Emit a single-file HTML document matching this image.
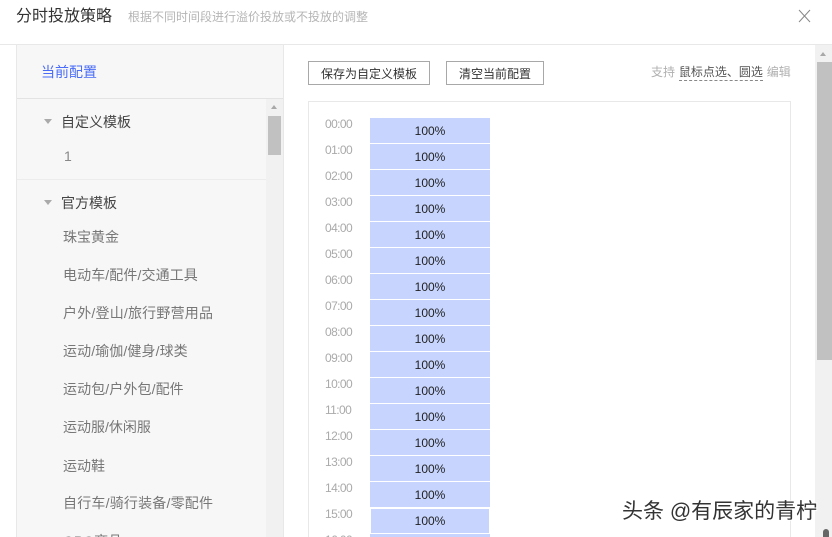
<!DOCTYPE html>
<html><head><meta charset="utf-8">
<style>
html,body{margin:0;padding:0;width:832px;height:537px;overflow:hidden;background:#fff}
body{position:relative;font-family:"Liberation Sans","Noto Sans CJK SC",sans-serif;font-size:12px;color:#333}
.a{position:absolute;white-space:nowrap}
.t{position:absolute;left:325px;width:30px;font-size:12px;letter-spacing:-.6px;line-height:14px;color:#aaa}
.c{position:absolute;left:370px;width:120px;height:25px;background:#c6d4fe;text-align:center;line-height:26px;font-size:12px;color:#222}
.i{position:absolute;left:63px;font-size:14px;line-height:18px;color:#777;white-space:nowrap}
.b{position:absolute;top:61px;height:22px;border:1px solid #a8a8a8;text-align:center;line-height:24px;font-size:12px;color:#333;background:#fff;box-sizing:content-box}
</style></head><body>
<div class="a" style="left:16px;top:6px;font-size:16px;line-height:22px;color:#333">分时投放策略</div>
<div class="a" style="left:128px;top:8px;font-size:12px;line-height:18px;color:#b5b5b5">根据不同时间段进行溢价投放或不投放的调整</div>
<svg class="a" style="left:798px;top:9px" width="13" height="14" viewBox="0 0 13 14"><path d="M1 1L12 13M12 1L1 13" stroke="#888" stroke-width="1" fill="none"/></svg>
<div class="a" style="left:0;top:44px;width:832px;height:1px;background:#e8e8e8"></div>

<div class="a" style="left:16px;top:45px;width:268px;height:492px;background:#f7f7f7;border-left:1px solid #e8e8e8;border-right:1px solid #e8e8e8;box-sizing:border-box"></div>
<div class="a" style="left:41px;top:63px;font-size:14px;line-height:18px;color:#4a6cf7">当前配置</div>
<div class="a" style="left:17px;top:98px;width:266px;height:1px;background:#e3e3e3"></div>
<div class="a" style="left:266px;top:99px;width:17px;height:438px;background:#f1f1f1"></div>
<div class="a" style="left:268px;top:116px;width:13px;height:39px;background:#c1c1c1"></div>
<div class="a" style="left:271px;top:105px;width:0;height:0;border-left:3.5px solid transparent;border-right:3.5px solid transparent;border-bottom:4px solid #a8a8a8"></div>
<div class="a" style="left:44px;top:119px;width:0;height:0;border-left:4px solid transparent;border-right:4px solid transparent;border-top:5px solid #aaa"></div>
<div class="a" style="left:61px;top:113px;font-size:14px;line-height:18px;color:#444">自定义模板</div>
<div class="i" style="left:64px;top:147px;color:#888">1</div>
<div class="a" style="left:17px;top:179px;width:249px;height:1px;background:#ececec"></div>
<div class="a" style="left:44px;top:200px;width:0;height:0;border-left:4px solid transparent;border-right:4px solid transparent;border-top:5px solid #aaa"></div>
<div class="a" style="left:61px;top:194px;font-size:14px;line-height:18px;color:#444">官方模板</div>
<div class="i" style="top:228px">珠宝黄金</div>
<div class="i" style="top:266px;letter-spacing:.1px">电动车/配件/交通工具</div>
<div class="i" style="top:304px;letter-spacing:.2px">户外/登山/旅行野营用品</div>
<div class="i" style="top:342px;letter-spacing:.1px">运动/瑜伽/健身/球类</div>
<div class="i" style="top:380px;letter-spacing:.1px">运动包/户外包/配件</div>
<div class="i" style="top:418px">运动服/休闲服</div>
<div class="i" style="top:457px">运动鞋</div>
<div class="i" style="top:494px;letter-spacing:.2px">自行车/骑行装备/零配件</div>
<div class="i" style="top:532px">OPO商品</div>

<div class="b" style="left:308px;width:120px">保存为自定义模板</div>
<div class="b" style="left:446px;width:96px">清空当前配置</div>
<div class="a" style="left:651px;top:64px;font-size:12px;line-height:17px;color:#b0b0b0;word-spacing:.5px">支持 <span style="color:#555;border-bottom:1px dashed #888;padding-bottom:1px">鼠标点选、圆选</span> 编辑</div>

<div class="a" style="left:308px;top:101px;width:483px;height:440px;border:1px solid #e8e8e8;box-sizing:border-box"></div>
<div class="t" style="top:117px">00:00</div><div class="c" style="top:118px">100%</div>
<div class="t" style="top:143px">01:00</div><div class="c" style="top:144px">100%</div>
<div class="t" style="top:169px">02:00</div><div class="c" style="top:170px">100%</div>
<div class="t" style="top:195px">03:00</div><div class="c" style="top:196px">100%</div>
<div class="t" style="top:221px">04:00</div><div class="c" style="top:222px">100%</div>
<div class="t" style="top:247px">05:00</div><div class="c" style="top:248px">100%</div>
<div class="t" style="top:273px">06:00</div><div class="c" style="top:274px">100%</div>
<div class="t" style="top:299px">07:00</div><div class="c" style="top:300px">100%</div>
<div class="t" style="top:325px">08:00</div><div class="c" style="top:326px">100%</div>
<div class="t" style="top:351px">09:00</div><div class="c" style="top:352px">100%</div>
<div class="t" style="top:377px">10:00</div><div class="c" style="top:378px">100%</div>
<div class="t" style="top:403px">11:00</div><div class="c" style="top:404px">100%</div>
<div class="t" style="top:429px">12:00</div><div class="c" style="top:430px">100%</div>
<div class="t" style="top:455px">13:00</div><div class="c" style="top:456px">100%</div>
<div class="t" style="top:481px">14:00</div><div class="c" style="top:482px">100%</div>
<div class="t" style="top:507px">15:00</div><div class="c" style="top:509px;left:371px;width:118px;height:24px;line-height:25px">100%</div>
<div class="t" style="top:533px">16:00</div><div class="c" style="top:534px">100%</div>

<div class="a" style="left:815px;top:45px;width:17px;height:492px;background:#f1f1f1"></div>
<div class="a" style="left:817px;top:62px;width:15px;height:298px;background:#c1c1c1"></div>
<div class="a" style="left:820px;top:52px;width:0;height:0;border-left:3.5px solid transparent;border-right:3.5px solid transparent;border-bottom:4px solid #a8a8a8"></div>
<div class="a" style="left:823px;top:529px;width:6px;height:10px;border-radius:3px 3px 0 0;background:#666"></div>

<div class="a" style="left:622px;top:499px;font-size:21px;line-height:25px;color:#333;text-shadow:1px 1px 0 #fff,-1px -1px 0 #fff,1px -1px 0 #fff,-1px 1px 0 #fff">头条 @有辰家的青柠</div>
</body></html>
